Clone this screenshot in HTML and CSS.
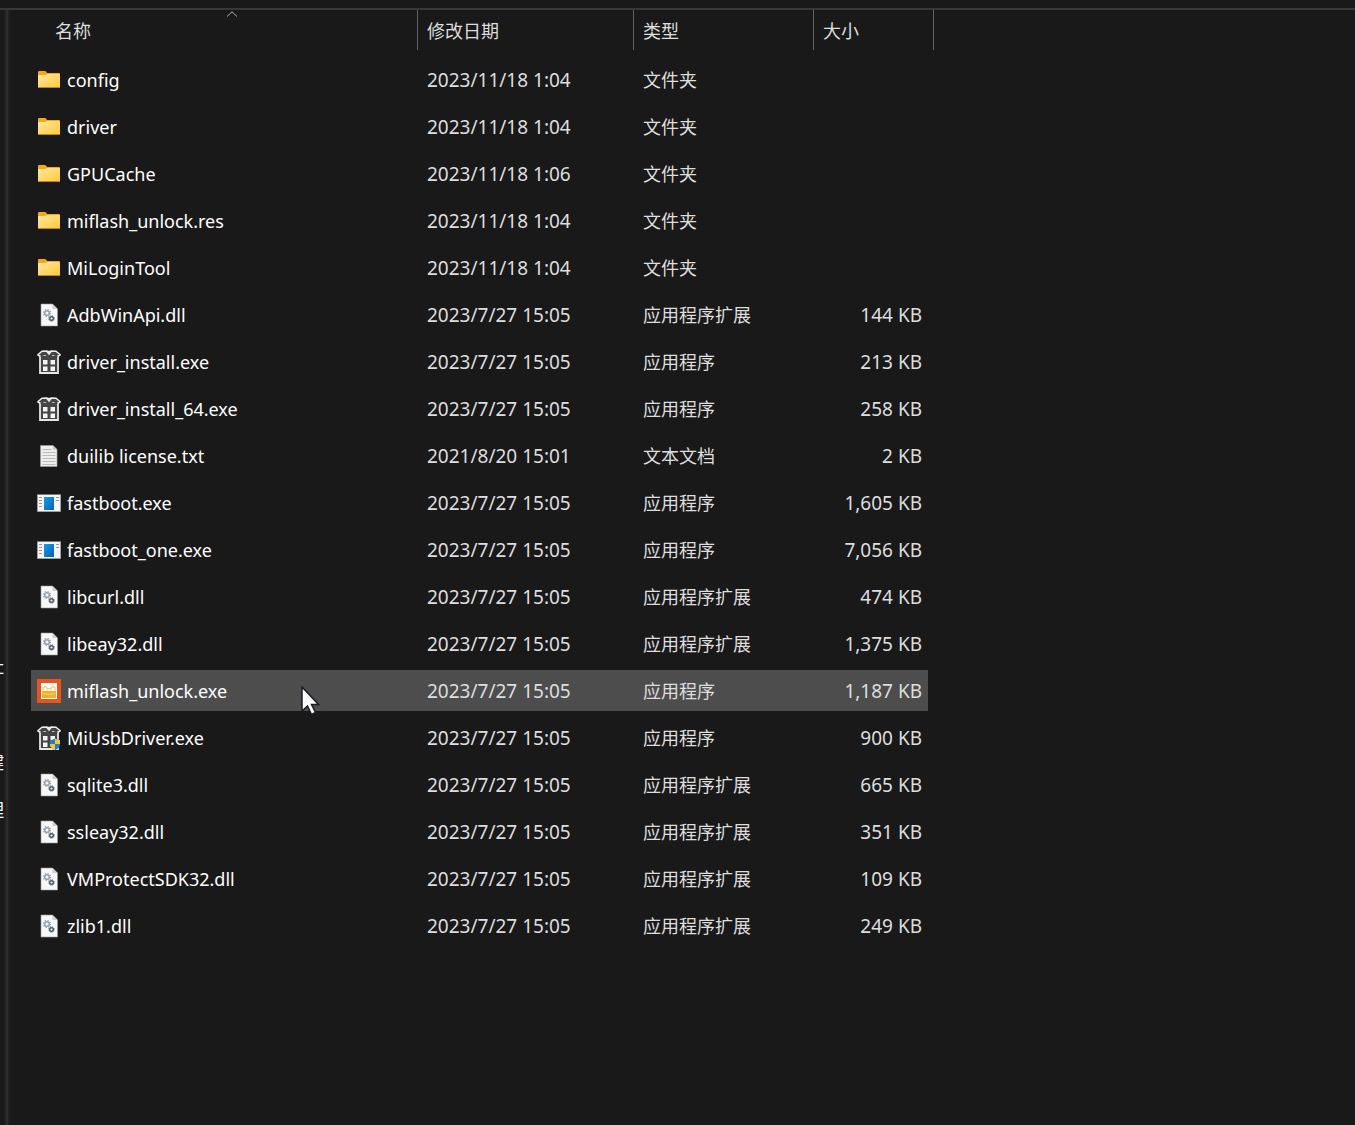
FILE: index.html
```
<!DOCTYPE html>
<html lang="zh-CN">
<head>
<meta charset="utf-8">
<title>miflash_unlock</title>
<link rel="stylesheet" href="styles.css">
</head>
<body>
<svg class="sprite" aria-hidden="true">
  <defs>
    <linearGradient id="gold" x1="0" y1="0" x2="1" y2="1"><stop offset="0" stop-color="#ffe7a2"/><stop offset="1" stop-color="#ffc935"/></linearGradient>
    <linearGradient id="blue" x1="0" y1="0" x2="1" y2="1"><stop offset="0" stop-color="#1c9bea"/><stop offset="1" stop-color="#0560b8"/></linearGradient>
    <symbol id="folder" viewBox="0 0 24 24">
      <path d="M1 4q0-1 1-1h6q1 0 2 2h12q1 0 1 1v4H1z" fill="#f5a80f"/>
      <path d="M1 7h7q1 0 2-1h12q1 0 1 1v12q0 1-1 1H2q-1 0-1-1z" fill="url(#gold)"/>
      <path d="M1 19.500h22" stroke="#b9851d"/>
    </symbol>
    <symbol id="dll" viewBox="0 0 24 24">
      <path d="M4 1h11.500l5 5v17H4z" fill="#f7f7f7" stroke="#9a9a9a" stroke-width=".6"/>
      <path d="M15.500 1v5h5z" fill="#cfcfcf"/>
      <circle cx="10" cy="10" r="2.300" fill="none" stroke="#98a4af" stroke-width="1.600"/>
      <circle cx="10" cy="10" r="3.500" fill="none" stroke="#98a4af" stroke-width="1.200" stroke-dasharray="1.375"/>
      <circle cx="14.500" cy="15.500" r="1.800" fill="none" stroke="#4c5966" stroke-width="1.400"/>
      <circle cx="14.500" cy="15.500" r="2.700" fill="none" stroke="#4c5966" stroke-width="1" stroke-dasharray="1.060"/>
    </symbol>
    <symbol id="box" viewBox="0 0 24 24">
      <path d="M3 5h18v18H3z" fill="#454545" stroke="#e6e6e6" stroke-width="1.800"/>
      <path d="M1 4.500 5 1l5-.2L12 3l2-2.200 5 .2 4 3.500-2.500 2.300L16 5l-4 2.500L8 5 3.500 6.800z" fill="#454545"/>
      <path d="M.5 5 5 1.200l4.500-.2 2.500 3 2.500-3 4.500.2L23.500 5M.5 5l3 1.300M23.500 5l-3 1.300M9.500 1 12 1.800 14.500 1" fill="none" stroke="#ededed" stroke-width="1.500"/>
      <path d="M6 10h4.500v4.500H6zM13.500 10H18v4.500h-4.500zM6 16.500h4.500V21H6zM13.500 16.500H18V21h-4.500z" fill="#f4f4f4"/>
    </symbol>
    <symbol id="shield" viewBox="0 0 24 24">
      <path d="M18 12.500q2 1.500 5 1.500v4q0 4-5 6-5-2-5-6v-4q3 0 5-1.500z" fill="#1580dd"/>
      <path d="M18 12.500q2 1.500 5 1.500v4h-5zM18 18v6q-5-2-5-6z" fill="#ffc91c"/>
    </symbol>
    <symbol id="txt" viewBox="0 0 24 24">
      <path d="M3.500 1.500H16l4 4v17H3.500z" fill="#eeeeed" stroke="#9b9b9b" stroke-width=".7"/>
      <path d="M16 1.500v4h4z" fill="#c2c2c2"/>
      <path d="M5.500 5.500h9M5.500 8.500h13M5.500 11.500h13M5.500 14.500h13M5.500 17.500h13M5.500 20.500h13" stroke="#bbb"/>
    </symbol>
    <symbol id="app" viewBox="0 0 24 24">
      <path d="M.5 3.500h23v17H.5z" fill="#f5f5f5" stroke="#a0a0a0"/>
      <path d="M0 3.500h24" stroke="#777"/>
      <path d="M7 6h10v13H7z" fill="url(#blue)"/>
      <path d="M2 6.500h3M2 9.500h3M2 12.500h3M2 15.500h3M19 6.500h3M19 9.500h3" stroke="#999"/>
    </symbol>
    <symbol id="mi" viewBox="0 0 24 24">
      <path d="M0 0h24v24H0z" fill="#e8541a"/>
      <path d="M4 4h16v16H4z" fill="#fffdf5"/>
      <path d="M5 12h14v7H5z" fill="#f0b02b"/>
      <path d="M6 11.500V9l2-2 2 2v2.500M14 11.500V9l2-2 2 2v2.500M10.500 9.500h3" fill="none" stroke="#f5cb85" stroke-width="1.200"/>
      <path d="M6 14.500q6 1.500 12 0" fill="none" stroke="#f8d37a"/>
    </symbol>
  </defs>
</svg>
<div class="window">
  <div class="toolbar-edge"></div>
  <div class="panes">
    <nav class="sidebar" aria-label="导航">
      <span class="nav-item">地址</span>
      <span class="nav-item nav-group">关键</span>
      <span class="nav-item">管理</span>
    </nav>
    <div class="splitter"></div>
    <main class="content">
      <table class="files">
        <colgroup><col class="col-name"><col class="col-date"><col class="col-type"><col class="col-size"></colgroup>
        <thead>
          <tr>
            <th scope="col" aria-sort="ascending"><button type="button">名称<svg class="sort" viewBox="0 0 12 6" aria-hidden="true"><path d="M1 5.500 6 .8l5 4.700" fill="none" stroke="#b4b4b4"/></svg></button></th>
            <th scope="col"><button type="button">修改日期</button></th>
            <th scope="col"><button type="button">类型</button></th>
            <th scope="col"><button type="button">大小</button></th>
          </tr>
        </thead>
        <tbody>
          <tr><td><span class="file"><svg class="icon"><use href="#folder"/></svg>config</span></td><td>2023/11/18 1:04</td><td>文件夹</td><td></td></tr>
          <tr><td><span class="file"><svg class="icon"><use href="#folder"/></svg>driver</span></td><td>2023/11/18 1:04</td><td>文件夹</td><td></td></tr>
          <tr><td><span class="file"><svg class="icon"><use href="#folder"/></svg>GPUCache</span></td><td>2023/11/18 1:06</td><td>文件夹</td><td></td></tr>
          <tr><td><span class="file"><svg class="icon"><use href="#folder"/></svg>miflash_unlock.res</span></td><td>2023/11/18 1:04</td><td>文件夹</td><td></td></tr>
          <tr><td><span class="file"><svg class="icon"><use href="#folder"/></svg>MiLoginTool</span></td><td>2023/11/18 1:04</td><td>文件夹</td><td></td></tr>
          <tr><td><span class="file"><svg class="icon"><use href="#dll"/></svg>AdbWinApi.dll</span></td><td>2023/7/27 15:05</td><td>应用程序扩展</td><td>144 KB</td></tr>
          <tr><td><span class="file"><svg class="icon"><use href="#box"/></svg>driver_install.exe</span></td><td>2023/7/27 15:05</td><td>应用程序</td><td>213 KB</td></tr>
          <tr><td><span class="file"><svg class="icon"><use href="#box"/></svg>driver_install_64.exe</span></td><td>2023/7/27 15:05</td><td>应用程序</td><td>258 KB</td></tr>
          <tr><td><span class="file"><svg class="icon"><use href="#txt"/></svg>duilib license.txt</span></td><td>2021/8/20 15:01</td><td>文本文档</td><td>2 KB</td></tr>
          <tr><td><span class="file"><svg class="icon"><use href="#app"/></svg>fastboot.exe</span></td><td>2023/7/27 15:05</td><td>应用程序</td><td>1,605 KB</td></tr>
          <tr><td><span class="file"><svg class="icon"><use href="#app"/></svg>fastboot_one.exe</span></td><td>2023/7/27 15:05</td><td>应用程序</td><td>7,056 KB</td></tr>
          <tr><td><span class="file"><svg class="icon"><use href="#dll"/></svg>libcurl.dll</span></td><td>2023/7/27 15:05</td><td>应用程序扩展</td><td>474 KB</td></tr>
          <tr><td><span class="file"><svg class="icon"><use href="#dll"/></svg>libeay32.dll</span></td><td>2023/7/27 15:05</td><td>应用程序扩展</td><td>1,375 KB</td></tr>
          <tr class="hovered"><td><span class="file"><svg class="icon"><use href="#mi"/></svg>miflash_unlock.exe</span><svg class="cursor" viewBox="0 0 20 30" aria-hidden="true"><path d="M1 1v24l5.500-5 4 8.500 4-2-4-8h7z" fill="#fff" stroke="#1c1a22" stroke-width="1.500"/></svg></td><td>2023/7/27 15:05</td><td>应用程序</td><td>1,187 KB</td></tr>
          <tr><td><span class="file"><svg class="icon"><use href="#box"/><use href="#shield"/></svg>MiUsbDriver.exe</span></td><td>2023/7/27 15:05</td><td>应用程序</td><td>900 KB</td></tr>
          <tr><td><span class="file"><svg class="icon"><use href="#dll"/></svg>sqlite3.dll</span></td><td>2023/7/27 15:05</td><td>应用程序扩展</td><td>665 KB</td></tr>
          <tr><td><span class="file"><svg class="icon"><use href="#dll"/></svg>ssleay32.dll</span></td><td>2023/7/27 15:05</td><td>应用程序扩展</td><td>351 KB</td></tr>
          <tr><td><span class="file"><svg class="icon"><use href="#dll"/></svg>VMProtectSDK32.dll</span></td><td>2023/7/27 15:05</td><td>应用程序扩展</td><td>109 KB</td></tr>
          <tr><td><span class="file"><svg class="icon"><use href="#dll"/></svg>zlib1.dll</span></td><td>2023/7/27 15:05</td><td>应用程序扩展</td><td>249 KB</td></tr>
        </tbody>
      </table>
    </main>
  </div>
</div>
</body>
</html>
```
FILE: styles.css
```
* {
  box-sizing: border-box;
}

body {
  margin: 0;
  background: #191919;
  color: #dedede;
  font: 19px/24px "Noto Sans", "Noto Sans CJK SC", sans-serif;
}

.sprite {
  position: absolute;
  width: 0;
  height: 0;
}

.window {
  display: flex;
  flex-direction: column;
  min-height: 100vh;
}

.toolbar-edge {
  height: 10px;
  border-bottom: 2px solid #383838;
}

.panes {
  display: flex;
  flex: 1;
}

/* The navigation pane is collapsed to its last few pixels. */
.sidebar {
  display: flex;
  flex-direction: column;
  align-items: flex-end;
  width: 4px;
  padding-top: 644px;
  overflow: hidden;
  color: #fff;
  font-size: 18px;
  white-space: nowrap;
}

.nav-item {
  margin-bottom: 24px;
}

.nav-group {
  margin-top: 48px;
}

.splitter {
  width: 6px;
  border: solid #202020;
  border-width: 0 2px;
  background: #2d2d2d;
}

.content {
  flex: 1;
  padding-left: 21px;
}

.files {
  width: 903px;
  table-layout: fixed;
  border-collapse: separate;
  border-spacing: 0;
}

.col-name { width: 387px; }
.col-date { width: 216px; }
.col-type { width: 180px; }
.col-size { width: 120px; }

.files th {
  padding: 0 0 6px;
}

.files th:first-child {
  padding-left: 15px;
}

.files button {
  position: relative;
  display: block;
  width: 100%;
  height: 40px;
  padding: 2px 9px 0;
  border: 0;
  border-right: 1px solid #636363;
  background: none;
  color: #dedede;
  font: 18px/24px "Noto Sans", "Noto Sans CJK SC", sans-serif;
  text-align: left;
}

.sort {
  position: absolute;
  top: 1px;
  left: 50%;
  width: 12px;
  height: 6px;
  margin-left: -6px;
}

.files td {
  height: 47px;
  padding: 0 9px;
  border: solid transparent;
  border-width: 3px 0;
  background-clip: padding-box;
  white-space: nowrap;
}

.files td:first-child {
  position: relative;
  padding-left: 6px;
  color: #fff;
  font-size: 18px;
}

.files td:nth-child(3) {
  font-size: 18px;
}

.files td:last-child {
  padding-right: 6px;
  border-right-width: 6px;
  text-align: right;
}

.hovered td {
  background-color: #4d4d4d;
}

.hovered td:first-child {
  border-radius: 2px 0 0 2px;
}

.file {
  display: flex;
  align-items: center;
  gap: 6px;
}

.icon {
  flex: none;
  width: 24px;
  height: 24px;
}

.cursor {
  position: absolute;
  top: 16px;
  left: 270px;
  width: 20px;
  height: 30px;
}
```
